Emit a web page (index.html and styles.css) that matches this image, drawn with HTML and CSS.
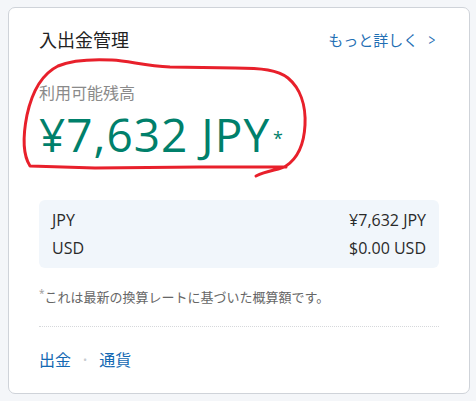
FILE: index.html
```html
<!DOCTYPE html>
<html>
<head>
    <link rel="stylesheet" href="styles.css">
</head>
<body>
    <div class="card">
        <div class="card-header">
            <span class="card-title">入出金管理</span>
            <a class="more-link" href="#">もっと詳しく<span class="chevron">&gt;</span></a>
        </div>
        <div class="balance-label">利用可能残高</div>
        <div class="balance-amount"><span>¥7,632 JPY</span><span class="star">*</span></div>
        <div class="currency-box">
            <div class="currency-row"><span>JPY</span><span>¥7,632 JPY</span></div>
            <div class="currency-row"><span>USD</span><span>$0.00 USD</span></div>
        </div>
        <div class="note"><span class="note-star">*</span>これは最新の換算レートに基づいた概算額です。</div>
        <div class="card-links">
            <a href="#">出金</a>
            <span class="dot">•</span>
            <a href="#">通貨</a>
        </div>
    </div>

    <svg class="scribble" width="476" height="401" viewBox="0 0 476 401">
        <path d="M 256 176 C 268 170, 280 170, 286 166 C 298 158, 304 145, 305 125 C 306 105, 300 88, 288 78 C 278 70, 262 68, 235 68 L 170 67 C 145 66, 130 61, 112 60 C 92 59, 72 60, 58 66 C 42 74, 32 92, 27 115 C 23 135, 23 155, 30 166 L 95 168 L 200 167 L 286 167"
              fill="none" stroke="#e8202b" stroke-width="3" stroke-linecap="round" stroke-linejoin="round"/>
    </svg>
</body>
</html>
```

FILE: styles.css
```css
body {
    margin: 0;
    padding: 7px 6px 7px 8px;
    background-color: #f4f6f9;
    font-family: "Open Sans", "Noto Sans CJK JP", sans-serif;
    color: #222;
}

.card {
    height: 387px;
    box-sizing: border-box;
    background: #fff;
    border: 1px solid #cfd3d9;
    border-radius: 7px;
    padding: 20px 30px 0 30px;
    display: flex;
    flex-direction: column;
}

.card-header {
    display: flex;
    justify-content: space-between;
    align-items: center;
    height: 24px;
}

.card-title {
    font-size: 18px;
    line-height: 24px;
}

.more-link {
    display: flex;
    align-items: center;
    font-size: 15px;
    line-height: 24px;
    color: #1f6fb4;
    text-decoration: none;
    margin-right: 2px;
}

.chevron {
    display: inline-block;
    margin-left: 9px;
    font-size: 17px;
    line-height: 24px;
    transform: scaleX(0.7);
}

.balance-label {
    margin-top: 30px;
    font-size: 16px;
    line-height: 22px;
    color: #8a8a8a;
}

.balance-amount {
    margin-top: 3px;
    display: flex;
    align-items: flex-start;
    font-size: 46px;
    line-height: 55px;
    height: 55px;
    color: #00806b;
    letter-spacing: 1px;
}

.star {
    font-size: 18px;
    line-height: 18px;
    margin-top: 22px;
    margin-left: 3px;
    letter-spacing: 0;
}

.currency-box {
    margin-top: 38px;
    background: #f1f6fb;
    border-radius: 6px;
    padding: 6px 13px;
}

.currency-row {
    display: flex;
    justify-content: space-between;
    font-size: 16px;
    line-height: 28px;
    color: #2a2a2a;
}

.note {
    margin-top: 20px;
    font-size: 13px;
    line-height: 18px;
    height: 18px;
    color: #666;
    padding-bottom: 20px;
    border-bottom: 1px dotted #d6d8db;
}

.note-star {
    font-size: 10px;
    line-height: 10px;
    vertical-align: top;
    color: #999;
}

.card-links {
    margin-top: 22px;
    font-size: 16px;
    line-height: 22px;
    display: flex;
    align-items: center;
    gap: 10px;
}

.card-links a {
    color: #1469b3;
    text-decoration: none;
}

.dot {
    color: #c8ccd1;
    font-size: 11px;
    margin: 0 2px;
}

.scribble {
    position: absolute;
    top: 0;
    left: 0;
    pointer-events: none;
}
```
